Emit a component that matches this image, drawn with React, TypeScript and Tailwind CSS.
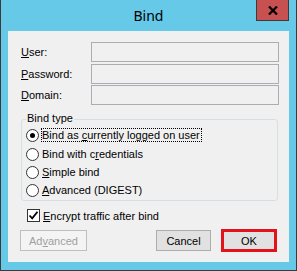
import React from "react";

const font = { fontFamily: '"Liberation Sans", Arial, sans-serif' };

function U({ children }: { children: React.ReactNode }) {
  return <span className="underline underline-offset-[1px] decoration-1">{children}</span>;
}

function Radio({ checked, focused, children, className = "" }: { checked?: boolean; focused?: boolean; children: React.ReactNode; className?: string }) {
  return (
    <div className={"flex items-center h-[18px] " + className}>
      <div className="w-[13px] h-[13px] rounded-full border border-[#333333] bg-white flex items-center justify-center shrink-0">
        {checked && <div className="w-[5px] h-[5px] rounded-full bg-black" />}
      </div>
      <div
        className={
          "ml-[2px] h-[14px] flex items-center pr-[1px] border " +
          (focused ? "border-dotted border-black" : "border-transparent")
        }
      >
        <span className="leading-[12px] text-[11px] text-black whitespace-nowrap">{children}</span>
      </div>
    </div>
  );
}

export default function App() {
  return (
    <div style={font} className="w-[297px] h-[271px] bg-[#66c9e8] border-x border-b border-[#3b3b3b] flex flex-col">
      {/* title bar */}
      <div className="h-[31px] grid grid-cols-[1fr_auto_1fr] shrink-0">
        <div />
        <div
          className="text-[14px] leading-[31px] text-black"
          style={{ fontFamily: '"Noto Sans", "Open Sans", sans-serif' }}
        >
          Bind
        </div>
        <div className="flex justify-end items-start pr-[7px]">
          <div className="w-[33px] h-[21px] bg-[#c75050] border-x border-b border-[#3b3b3b] flex items-center justify-center">
            <svg width="10" height="9" viewBox="0 0 10 9">
              <path d="M1 0.5 L9 8.5 M9 0.5 L1 8.5" stroke="black" strokeWidth="2.2" />
            </svg>
          </div>
        </div>
      </div>

      {/* client area */}
      <div className="mx-[7px] h-[231px] bg-[#f0f0f0] flex flex-col text-[11px] text-black">
        <div className="pl-[13px] pr-[10px] pt-[11px] flex flex-col">
          <div className="flex items-center h-[20px]">
            <div className="w-[70px] leading-[12px]"><U>U</U>ser:</div>
            <div className="flex-1 h-[20px] border border-[#abadb3] bg-[#f0f0f0]" />
          </div>
          <div className="flex items-center h-[20px] mt-[2px]">
            <div className="w-[70px] leading-[12px]"><U>P</U>assword:</div>
            <div className="flex-1 h-[20px] border border-[#abadb3] bg-[#f0f0f0]" />
          </div>
          <div className="flex items-center h-[20px] mt-[1px]">
            <div className="w-[70px] leading-[12px]"><U>D</U>omain:</div>
            <div className="flex-1 h-[20px] border border-[#abadb3] bg-[#f0f0f0]" />
          </div>
        </div>

        {/* group box */}
        <div className="ml-[13px] mr-[11px] mt-[14px] h-[82px] relative border border-[#d5dfe5] rounded-[3px] flex flex-col pl-[4px] pt-[6px]">
          <div className="absolute -top-[8px] left-[4px] px-[1px] bg-[#f0f0f0] leading-[13px]">Bind type</div>
          <Radio checked focused>
            Bind as <U>c</U>urrently logged on user
          </Radio>
          <Radio className="mt-[1px]">
            Bind with c<U>r</U>edentials
          </Radio>
          <Radio>
            <U>S</U>imple bind
          </Radio>
          <Radio>
            <U>A</U>dvanced (DIGEST)
          </Radio>
        </div>

        {/* checkbox */}
        <div className="flex items-center pl-[19px] mt-[8px] h-[13px]">
          <div className="w-[13px] h-[13px] border border-[#333333] bg-white flex items-center justify-center shrink-0">
            <svg width="11" height="11" viewBox="0 0 11 11">
              <path d="M1.5 5.5 L4.2 8.3 L9.5 1.8" fill="none" stroke="black" strokeWidth="1.8" />
            </svg>
          </div>
          <span className="ml-[3px] leading-[12px] whitespace-nowrap"><U>E</U>ncrypt traffic after bind</span>
        </div>

        {/* buttons */}
        <div className="flex items-center pl-[12px] pr-[12px] mt-[7px] h-[23px]">
          <div className="w-[67px] h-[21px] border border-[#bfbfbf] bg-[#f4f4f4] flex items-center justify-center text-[#a0a0a0] leading-[12px]">
            Ad<U>v</U>anced
          </div>
          <div className="flex-1" />
          <div className="w-[55px] h-[21px] border border-[#adadad] bg-[#e1e1e1] flex items-center justify-center leading-[12px]">
            Cancel
          </div>
          <div className="ml-[10px] w-[56px] h-[23px] border-[3px] border-[#e3131b] bg-[#e1e1e1] flex items-center justify-center leading-[12px]">
            OK
          </div>
        </div>
      </div>
    </div>
  );
}
